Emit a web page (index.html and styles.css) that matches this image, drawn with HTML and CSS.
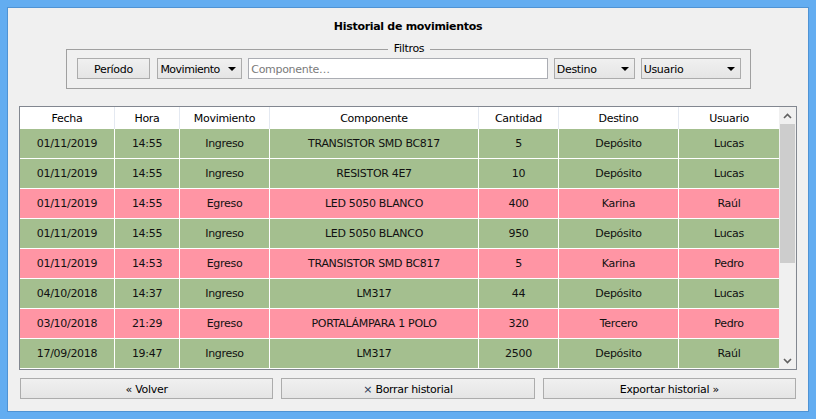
FILE: index.html
```html
<!DOCTYPE html>
<html lang="es">
<head>
<meta charset="utf-8">
<title>Historial de movimientos</title>
<link rel="stylesheet" href="styles.css">
</head>
<body>
<div class="window">
  <div class="client">
    <h1 class="title">Historial de movimientos</h1>
    <fieldset class="filters">
      <legend>Filtros</legend>
      <div class="filter-row">
        <button class="btn periodo">Período</button>
        <div class="combo c-mov"><span>Movimiento</span><i class="arrow"></i></div>
        <input class="search" type="text" placeholder="Componente…">
        <div class="combo c-dest"><span>Destino</span><i class="arrow"></i></div>
        <div class="combo c-user"><span>Usuario</span><i class="arrow"></i></div>
      </div>
    </fieldset>

    <div class="table">
      <div class="grid">
        <div class="head">
          <div>Fecha</div><div>Hora</div><div>Movimiento</div><div>Componente</div><div>Cantidad</div><div>Destino</div><div>Usuario</div>
        </div>
        <div class="row in"><div>01/11/2019</div><div>14:55</div><div>Ingreso</div><div>TRANSISTOR SMD BC817</div><div>5</div><div>Depósito</div><div>Lucas</div></div>
        <div class="row in"><div>01/11/2019</div><div>14:55</div><div>Ingreso</div><div>RESISTOR 4E7</div><div>10</div><div>Depósito</div><div>Lucas</div></div>
        <div class="row out"><div>01/11/2019</div><div>14:55</div><div>Egreso</div><div>LED 5050 BLANCO</div><div>400</div><div>Karina</div><div>Raúl</div></div>
        <div class="row in"><div>01/11/2019</div><div>14:55</div><div>Ingreso</div><div>LED 5050 BLANCO</div><div>950</div><div>Depósito</div><div>Lucas</div></div>
        <div class="row out"><div>01/11/2019</div><div>14:53</div><div>Egreso</div><div>TRANSISTOR SMD BC817</div><div>5</div><div>Karina</div><div>Pedro</div></div>
        <div class="row in"><div>04/10/2018</div><div>14:37</div><div>Ingreso</div><div>LM317</div><div>44</div><div>Depósito</div><div>Lucas</div></div>
        <div class="row out"><div>03/10/2018</div><div>21:29</div><div>Egreso</div><div>PORTALÁMPARA 1 POLO</div><div>320</div><div>Tercero</div><div>Pedro</div></div>
        <div class="row in"><div>17/09/2018</div><div>19:47</div><div>Ingreso</div><div>LM317</div><div>2500</div><div>Depósito</div><div>Raúl</div></div>
      </div>
      <div class="scrollbar">
        <div class="sb-btn"><svg width="9" height="6" viewBox="0 0 9 6"><path d="M1 5 L4.5 1.5 L8 5" fill="none" stroke="#606060" stroke-width="1.6"/></svg></div>
        <div class="sb-track"><div class="sb-thumb"></div></div>
        <div class="sb-btn"><svg width="9" height="6" viewBox="0 0 9 6"><path d="M1 1 L4.5 4.5 L8 1" fill="none" stroke="#606060" stroke-width="1.6"/></svg></div>
      </div>
    </div>

    <div class="actions">
      <button class="btn">« Volver</button>
      <button class="btn"><span class="x">×</span> Borrar historial</button>
      <button class="btn">Exportar historial »</button>
    </div>
  </div>
</div>
</body>
</html>
```

FILE: styles.css
```css
* { box-sizing: border-box; }
html, body { margin: 0; padding: 0; }
body {
  font-family: "DejaVu Sans", "Liberation Sans", sans-serif;
  font-size: 11px;
  letter-spacing: -0.3px;
  color: #000;
  width: 816px;
  height: 419px;
  overflow: hidden;
}
.window {
  width: 816px;
  height: 419px;
  background: #63adf1;
  padding: 7px;
}
.client {
  width: 802px;
  height: 405px;
  border: 1px solid #4f93d4;
  background: #f0f0f0;
  display: flex;
  flex-direction: column;
  align-items: center;
}
.title {
  margin: 11px 0 0;
  font-size: 11px;
  font-weight: bold;
  line-height: 16px;
  height: 16px;
}
.filters {
  margin: 6px 0 0;
  width: 685px;
  border: 1px solid #a0a0a0;
  padding: 1px 8px 9px 10px;
  min-inline-size: 0;
}
.filters legend {
  margin: 0 auto;
  padding: 0 6px;
  line-height: 16px;
  height: 16px;
}
.filter-row {
  display: flex;
  gap: 6px;
  height: 21px;
}
.btn {
  font: inherit;
  letter-spacing: inherit;
  color: #000;
  height: 21px;
  border: 1px solid #acacac;
  background: linear-gradient(#f0f0f0, #e5e5e5);
  padding: 1px 0 0;
  margin: 0;
  line-height: 19px;
}
.periodo { width: 74px; margin-right: 1px; }
.combo {
  height: 21px;
  border: 1px solid #acacac;
  background: linear-gradient(#f0f0f0, #e5e5e5);
  display: flex;
  align-items: center;
  justify-content: space-between;
  padding: 1px 5px 0 2px;
  line-height: 19px;
}
.c-mov { width: 85px; letter-spacing: -0.5px; }
.c-dest { width: 81px; }
.c-user { width: 101px; }
.arrow {
  flex: none;
  width: 0; height: 0;
  margin-top: -1px;
  border-left: 4px solid transparent;
  border-right: 4px solid transparent;
  border-top: 4px solid #000;
}
.search {
  width: 300px;
  height: 21px;
  border: 1px solid #abadb3;
  background: #fff;
  font: inherit;
  letter-spacing: inherit;
  padding: 1px 2px 0;
  margin: 0;
  outline: none;
}
.search::placeholder { color: #7a7a7a; }

.table {
  margin-top: 17px;
  width: 778px;
  height: 264px;
  border: 1px solid #828790;
  background: #fff;
  display: flex;
  overflow: hidden;
}
.grid {
  width: 759px;
  display: flex;
  flex-direction: column;
}
.head, .row {
  display: grid;
  grid-template-columns: 95px 65px 90px 209px 80px 120px 100px;
}
.head { height: 22px; background: #fff; flex: none; }
.head > div {
  border-right: 1px solid #e4e9f1;
  text-align: center;
  line-height: 22px;
  padding-top: 1px;
}
.row { height: 30px; flex: none; }
.row > div {
  border-right: 1px solid #fff;
  border-bottom: 1px solid #fff;
  text-align: center;
  line-height: 28px;
  padding-top: 1px;
  color: #111;
}
.head > div:last-child, .row > div:last-child { border-right: none; }
.row.in { background: #a4bf8f; }
.row.out { background: #ff95a4; }

.scrollbar {
  width: 17px;
  background: #f0f0f0;
  display: flex;
  flex-direction: column;
}
.sb-btn {
  height: 17px;
  display: flex;
  align-items: center;
  justify-content: center;
  flex: none;
}
.sb-track { flex: 1; padding: 0 1px; }
.sb-thumb { height: 139px; background: #cdcdcd; }

.actions {
  margin-top: 8px;
  width: 776px;
  display: flex;
  gap: 8px;
}
.actions .btn { flex: 1; }
.x { color: #2b3a55; }
```
